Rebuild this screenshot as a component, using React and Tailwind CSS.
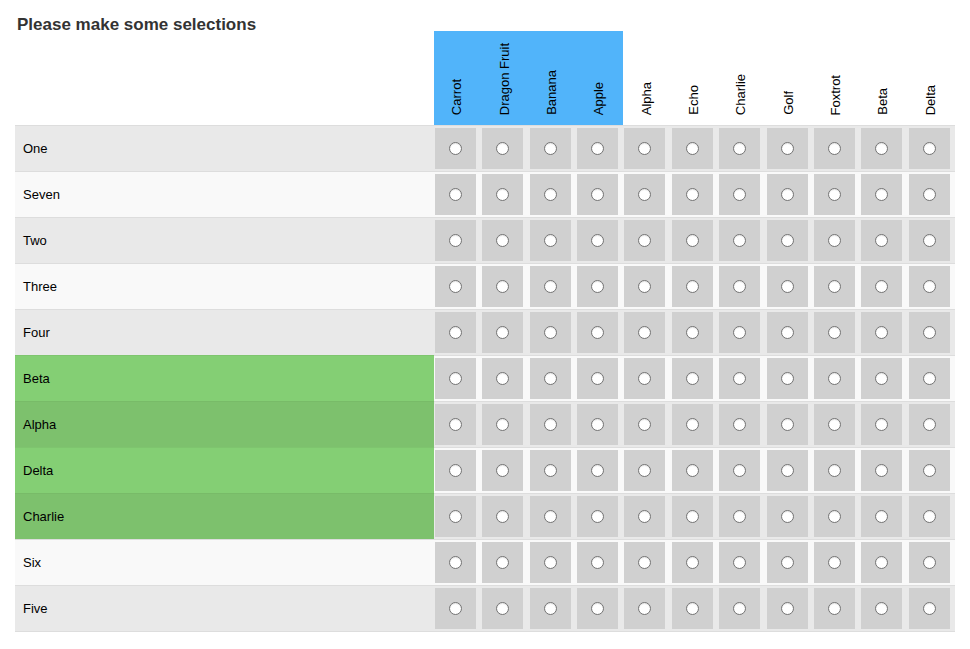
const columns = [
  { name: 'Carrot', blue: true },
  { name: 'Dragon Fruit', blue: true },
  { name: 'Banana', blue: true },
  { name: 'Apple', blue: true },
  { name: 'Alpha' },
  { name: 'Echo' },
  { name: 'Charlie' },
  { name: 'Golf' },
  { name: 'Foxtrot' },
  { name: 'Beta' },
  { name: 'Delta' },
];

const rows = [
  { name: 'One' },
  { name: 'Seven' },
  { name: 'Two' },
  { name: 'Three' },
  { name: 'Four' },
  { name: 'Beta', green: true },
  { name: 'Alpha', green: true },
  { name: 'Delta', green: true },
  { name: 'Charlie', green: true },
  { name: 'Six' },
  { name: 'Five' },
];

function Radio() {
  return (
    <span className="block w-[13px] h-[13px] rounded-full bg-white border border-[#737373] shadow-[inset_0_1px_1px_rgba(0,0,0,0.1)]" />
  );
}

export default function App() {
  return (
    <div className="min-h-screen bg-white px-[15px] pt-[14px] font-['Liberation_Sans',Arial,sans-serif] text-black">
      <h2 className="h-[17px] text-[17px] leading-[21px] font-bold text-[#333333] pl-[2px]">
        Please make some selections
      </h2>

      <div className="w-[940px]">
        {/* Header */}
        <div className="grid grid-cols-[419px_repeat(11,minmax(0,1fr))] h-[94px]">
          <div />
          {columns.map((col) => (
            <div
              key={col.name}
              className={`flex items-end justify-center pb-[10px] ${col.blue ? 'bg-[#51b4fa]' : ''}`}
            >
              <span className="[writing-mode:vertical-rl] rotate-180 text-[13px] leading-[15px] whitespace-nowrap -translate-x-px">
                {col.name}
              </span>
            </div>
          ))}
        </div>

        {/* Rows */}
        <div className="border-b border-[#dddddd]">
          {rows.map((row, i) => {
            const stripe = i % 2 === 0 ? 'bg-[#e9e9e9]' : 'bg-[#f9f9f9]';
            const green =
              i % 2 === 0
                ? 'bg-[#7dc16d] border-t border-[#78bb68] -mt-px'
                : 'bg-[#84cf74] border-t border-[#7ec56e] -mt-px';
            return (
              <div
                key={row.name + i}
                className={`grid grid-cols-[419px_repeat(11,minmax(0,1fr))] h-[46px] border-t border-[#dddddd] ${stripe}`}
              >
                <div
                  className={`flex items-center pl-[8px] text-[13px] ${row.green ? green : ''}`}
                >
                  {row.name}
                </div>
                {columns.map((col) => (
                  <div key={col.name} className="pt-[2px] pl-px">
                    <div className="w-[41px] h-[41px] bg-[#d0d0d0] flex items-center justify-center">
                      <Radio />
                    </div>
                  </div>
                ))}
              </div>
            );
          })}
        </div>
      </div>
    </div>
  );
}
